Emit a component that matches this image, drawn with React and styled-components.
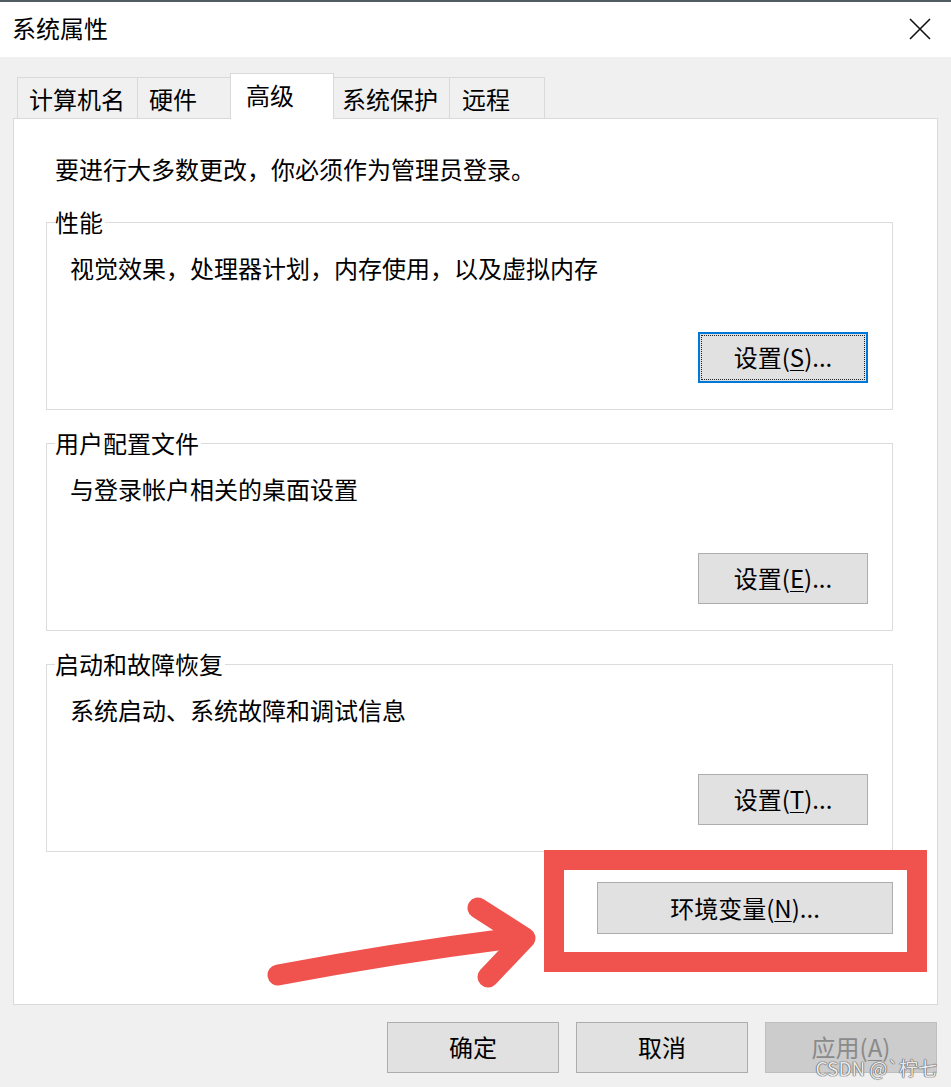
import styled, { createGlobalStyle } from "styled-components";

// ===== Data =====
const TABS = [
  { label: "计算机名", width: 121, pad: 11 },
  { label: "硬件", width: 94, pad: 11 },
  { label: "高级", width: 104, pad: 15, active: true },
  { label: "系统保护", width: 117, pad: 8 },
  { label: "远程", width: 96, pad: 12 },
];

const GROUPS = [
  { title: "性能", desc: "视觉效果，处理器计划，内存使用，以及虚拟内存", key: "S", focused: true },
  { title: "用户配置文件", desc: "与登录帐户相关的桌面设置", key: "E" },
  { title: "启动和故障恢复", desc: "系统启动、系统故障和调试信息", key: "T" },
];

export default function App() {
  return (
    <>
      <GlobalStyle />
      <Window>
        {/* Title bar */}
        <TitleBar>
          <Title>系统属性</Title>
          <CloseButton aria-label="关闭">
            <svg width="22" height="22" viewBox="0 0 22 22">
              <path d="M1 1 L21 21 M21 1 L1 21" stroke="#111" strokeWidth="1.6" fill="none" />
            </svg>
          </CloseButton>
        </TitleBar>

        <Body>
          {/* Tabs */}
          <TabStrip>
            {TABS.map((t) => (
              <Tab key={t.label} $width={t.width} $pad={t.pad} $active={t.active}>
                {t.label}
              </Tab>
            ))}
          </TabStrip>

          {/* Advanced page */}
          <Panel>
            <Intro>要进行大多数更改，你必须作为管理员登录。</Intro>

            {GROUPS.map((g) => (
              <GroupBox key={g.title}>
                <Legend>{g.title}</Legend>
                <Desc>{g.desc}</Desc>
                <SettingsButton $focused={g.focused}>
                  设置(<u>{g.key}</u>)...
                </SettingsButton>
              </GroupBox>
            ))}

            <EnvButton>
              环境变量(<u>N</u>)...
            </EnvButton>
          </Panel>

          {/* Dialog buttons */}
          <Footer>
            <DialogButton>确定</DialogButton>
            <DialogButton>取消</DialogButton>
            <DialogButton $disabled>
              应用(<u>A</u>)
            </DialogButton>
          </Footer>
        </Body>

        {/* Red annotation */}
        <RedFrame />
        <Arrow viewBox="0 0 290 100" width="290" height="100">
          <path
            d="M18 85 Q140 62 262 47"
            stroke="#f0524d"
            strokeWidth="21"
            strokeLinecap="round"
            fill="none"
          />
          <path
            d="M218 18 L265 48 L228 87"
            stroke="#f0524d"
            strokeWidth="21"
            strokeLinecap="round"
            strokeLinejoin="round"
            fill="none"
          />
        </Arrow>

        <Watermark>CSDN @`柠七</Watermark>
      </Window>
    </>
  );
}

// ===== Styling =====
const GlobalStyle = createGlobalStyle`
  html, body {
    margin: 0;
    padding: 0;
    background: #f0f0f0;
  }
  * { box-sizing: border-box; }
`;

const Window = styled.div`
  position: relative;
  width: 951px;
  height: 1087px;
  overflow: hidden;
  background: #f0f0f0;
  color: #000;
  font-family: "Noto Sans CJK SC", "Noto Sans", sans-serif;
  font-size: 24px;
  line-height: 28px;
`;

const TitleBar = styled.div`
  height: 57px;
  background: #fff;
  border-top: 2px solid #4f5d63;
  display: flex;
  align-items: center;
  justify-content: space-between;
  padding: 0 20px 4px 12px;
`;

const Title = styled.div`
  font-size: 24px;
`;

const CloseButton = styled.div`
  display: flex;
  width: 22px;
  height: 22px;
  margin-top: 2px;
`;

const Body = styled.div`
  padding: 16px 13px 0 13px;
`;

const TabStrip = styled.div`
  display: flex;
  align-items: flex-end;
  height: 46px;
  padding-left: 4px;
  margin-bottom: -1px;
  position: relative;
  z-index: 1;
`;

const Tab = styled.div`
  width: ${(p) => p.$width}px;
  height: ${(p) => (p.$active ? 46 : 42)}px;
  margin-right: -1px;
  display: flex;
  align-items: center;
  padding: ${(p) => (p.$active ? `0 0 4px ${p.$pad}px` : `2px 0 0 ${p.$pad}px`)};
  background: ${(p) => (p.$active ? "#fff" : "#f0f0f0")};
  border: 1px solid #d9d9d9;
  border-bottom: ${(p) => (p.$active ? "none" : "1px solid #d9d9d9")};
  position: relative;
  z-index: ${(p) => (p.$active ? 2 : 1)};
  white-space: nowrap;
`;

const Panel = styled.div`
  height: 887px;
  background: #fff;
  border: 1px solid #d9d9d9;
  padding: 36px 44px 0 32px;
  display: flex;
  flex-direction: column;
`;

const Intro = styled.div`
  margin-left: 9px;
  margin-bottom: 39px;
`;

const GroupBox = styled.div`
  height: 188px;
  border: 1px solid #dcdcdc;
  display: flex;
  flex-direction: column;
  padding: 0 24px 26px 0;

  & + & {
    margin-top: 33px;
  }
`;

const Legend = styled.div`
  align-self: flex-start;
  margin: -15px 0 0 8px;
  padding-right: 2px;
  background: #fff;
`;

const Desc = styled.div`
  margin: 18px 0 0 23px;
`;

const ButtonBase = styled.div`
  display: flex;
  align-items: center;
  justify-content: center;
  padding-bottom: 1px;
  background: #e1e1e1;
  border: 1px solid #adadad;
  white-space: nowrap;

  u {
    text-underline-offset: 3px;
    text-decoration-thickness: 1px;
  }
`;

const SettingsButton = styled(ButtonBase)`
  margin-top: auto;
  align-self: flex-end;
  width: 170px;
  height: 51px;
  ${(p) =>
    p.$focused &&
    `
    border: 2px solid #0078d7;
    outline: 1px dotted #222;
    outline-offset: -4px;
  `}
`;

const EnvButton = styled(ButtonBase)`
  align-self: flex-end;
  margin-top: 30px;
  width: 296px;
  height: 52px;
`;

const Footer = styled.div`
  display: flex;
  justify-content: flex-end;
  gap: 17px;
  margin-top: 17px;
  padding-right: 1px;
`;

const DialogButton = styled(ButtonBase)`
  width: 172px;
  height: 51px;
  background: ${(p) => (p.$disabled ? "#cccccc" : "#e1e1e1")};
  border-color: ${(p) => (p.$disabled ? "#bfbfbf" : "#adadad")};
  color: ${(p) => (p.$disabled ? "#8a8a8a" : "#000")};
`;

const RedFrame = styled.div`
  position: absolute;
  left: 544px;
  top: 850px;
  width: 383px;
  height: 122px;
  border: 20px solid #f0524d;
`;

const Arrow = styled.svg`
  position: absolute;
  left: 260px;
  top: 890px;
  overflow: visible;
`;

const Watermark = styled.div`
  position: absolute;
  right: 14px;
  bottom: 8px;
  font-family: "Noto Sans CJK SC", "Liberation Sans", sans-serif;
  font-size: 19px;
  line-height: 22px;
  color: rgba(255, 255, 255, 0.9);
  text-shadow: 0 0 1px #555, 0 0 1px #555, 0 0 1px #555;
`;
